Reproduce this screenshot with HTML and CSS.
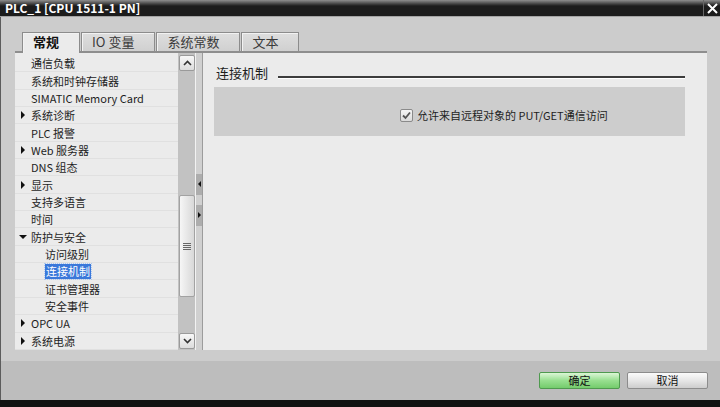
FILE: index.html
```html
<!doctype html>
<html>
  <head>
    <meta charset="utf-8" />
    <title>PLC_1 [CPU 1511-1 PN]</title>
    <link rel="stylesheet" href="styles.css" />
  </head>
  <body>
    <div class="window">
      <div class="titlebar">
        <div class="title">PLC_1 [CPU 1511-1 PN]</div>
        <div class="close">
          <svg width="11" height="11" viewBox="0 0 11 11">
            <path d="M1 1 L10 10 M10 1 L1 10" stroke="#fff" stroke-width="2" />
          </svg>
        </div>
      </div>

      <div class="dialog">
        <div class="tabs">
          <div class="tab active">常规</div>
          <div class="tab">IO 变量</div>
          <div class="tab">系统常数</div>
          <div class="tab">文本</div>
        </div>

        <div class="panel">
          <ul class="tree">
            <li class="node">通信负载</li>
            <li class="node">系统和时钟存储器</li>
            <li class="node">SIMATIC Memory Card</li>
            <li class="node folder"><span class="caret"></span>系统诊断</li>
            <li class="node">PLC 报警</li>
            <li class="node folder"><span class="caret"></span>Web 服务器</li>
            <li class="node">DNS 组态</li>
            <li class="node folder"><span class="caret"></span>显示</li>
            <li class="node">支持多语言</li>
            <li class="node">时间</li>
            <li class="node folder open"><span class="caret"></span>防护与安全</li>
            <li class="node child">访问级别</li>
            <li class="node child"><span class="selected">连接机制</span></li>
            <li class="node child">证书管理器</li>
            <li class="node child">安全事件</li>
            <li class="node folder"><span class="caret"></span>OPC UA</li>
            <li class="node folder"><span class="caret"></span>系统电源</li>
          </ul>

          <div class="scrollbar">
            <div class="scroll-btn">
              <svg width="9" height="6" viewBox="0 0 9 6">
                <path d="M1 5 L4.5 1.5 L8 5" fill="none" stroke="#333" stroke-width="1.6" />
              </svg>
            </div>
            <div class="track">
              <div class="thumb">
                <svg width="8" height="7" viewBox="0 0 8 7">
                  <path d="M0 0.5 H8 M0 2.5 H8 M0 4.5 H8 M0 6.5 H8" stroke="#666" stroke-width="1" />
                </svg>
              </div>
            </div>
            <div class="scroll-btn">
              <svg width="9" height="6" viewBox="0 0 9 6">
                <path d="M1 1 L4.5 4.5 L8 1" fill="none" stroke="#333" stroke-width="1.6" />
              </svg>
            </div>
          </div>

          <div class="splitter">
            <div class="grip"><span class="arrow-left"></span></div>
            <div class="grip"><span class="arrow-right"></span></div>
          </div>

          <div class="content">
            <div class="section-head">
              <span class="section-title">连接机制</span>
              <span class="section-rule"></span>
            </div>
            <div class="section-body">
              <label class="check-row">
                <span class="checkbox">
                  <svg width="11" height="11" viewBox="0 0 11 11">
                    <path d="M2 5.5 L4.5 8 L9 2.5" fill="none" stroke="#555" stroke-width="1.8" />
                  </svg>
                </span>
                允许来自远程对象的 PUT/GET通信访问
              </label>
            </div>
          </div>
        </div>

        <div class="footer">
          <button class="btn ok">确定</button>
          <button class="btn">取消</button>
        </div>
      </div>

      <div class="taskbar"></div>
    </div>
  </body>
</html>
```

FILE: styles.css
```css
* {
  margin: 0;
  padding: 0;
  box-sizing: border-box;
}

body {
  width: 720px;
  height: 407px;
  overflow: hidden;
  background: #111;
  font-family: "Noto Sans CJK SC", "Noto Sans", sans-serif;
  font-size: 11px;
  color: #1e1e1e;
}

.window {
  height: 407px;
  display: flex;
  flex-direction: column;
}

/* title bar */

.titlebar {
  height: 17px;
  display: flex;
  background: linear-gradient(#8e8e8e 0, #404040 4px, #1c1c1c 6px);
  border-bottom: 1px solid #a4a4a4;
  color: #fff;
}

.title {
  flex: 1;
  padding-left: 5px;
  font-weight: bold;
  font-size: 12px;
  line-height: 16px;
}

.close {
  width: 17px;
  border-left: 1px solid #666;
  display: flex;
  align-items: center;
  justify-content: center;
}

/* dialog */

.dialog {
  height: 383px;
  background: #cccccc;
  border-left: 1px solid #5c5c5c;
  display: flex;
  flex-direction: column;
  padding-top: 15px;
}

.tabs {
  display: flex;
  height: 19px;
  padding-left: 21px;
  gap: 1px;
  position: relative;
  z-index: 1;
}

.tab {
  padding: 0 20px 0 10px;
  font-size: 13px;
  line-height: 18px;
  color: #3a3a3a;
  background: linear-gradient(#dedede, #d0d0d0);
  border: 1px solid #8c8c8c;
  border-bottom: none;
  box-shadow: inset 1px 1px 0 #f2f2f2;
}

.tab.active {
  font-weight: bold;
  color: #111;
  background: #ebebeb;
  height: 21px;
}

.panel {
  margin-left: 14px;
  width: 692px;
  height: 299px;
  border-top: 2px solid #8e8e8e;
  background: #ebebeb;
  display: flex;
}

/* tree */

.tree {
  list-style: none;
  width: 163px;
  padding-top: 2px;
}

.node {
  height: 17.35px;
  display: flex;
  align-items: center;
  padding-left: 16px;
  border-bottom: 1px solid #e0e0e0;
  white-space: nowrap;
}

.node.folder {
  padding-left: 6px;
}

.node.child {
  padding-left: 30px;
}

.caret {
  width: 0;
  height: 0;
  margin-right: 6px;
  border-left: 4px solid #111;
  border-top: 4px solid transparent;
  border-bottom: 4px solid transparent;
}

.node.open {
  padding-left: 4px;
}

.node.open .caret {
  margin-right: 4px;
  border-left: 4px solid transparent;
  border-right: 4px solid transparent;
  border-top: 4px solid #111;
  border-bottom: none;
}

.selected {
  padding: 0 1px;
  line-height: 15px;
  background: #3a78da;
  color: #fff;
  outline: 1px dotted #a9c6f2;
}

/* scrollbar */

.scrollbar {
  width: 17px;
  background: #c2c2c2;
  display: flex;
  flex-direction: column;
  padding: 2px 0 1px 1px;
}

.scroll-btn {
  height: 16px;
  width: 16px;
  display: flex;
  align-items: center;
  justify-content: center;
  background: linear-gradient(#f8f8f8, #dcdcdc);
  border: 1px solid #9a9a9a;
  border-radius: 2px;
}

.track {
  flex: 1;
}

.thumb {
  margin-top: 124px;
  height: 102px;
  width: 16px;
  display: flex;
  align-items: center;
  justify-content: center;
  background: linear-gradient(to right, #f6f6f6, #d8d8d8);
  border: 1px solid #a2a2a2;
  border-radius: 2px;
}

/* splitter */

.splitter {
  width: 8px;
  background: #d0d0d0;
  border-left: 1px solid #f2f2f2;
  border-right: 1px solid #9c9c9c;
  display: flex;
  flex-direction: column;
  justify-content: center;
  gap: 10px;
  padding-bottom: 4px;
}

.grip {
  height: 21px;
  background: #adadad;
  display: flex;
  align-items: center;
  justify-content: center;
}

.arrow-left {
  border-right: 3px solid #111;
  border-top: 3px solid transparent;
  border-bottom: 3px solid transparent;
}

.arrow-right {
  border-left: 3px solid #111;
  border-top: 3px solid transparent;
  border-bottom: 3px solid transparent;
}

/* content */

.content {
  flex: 1;
  padding: 13px 22px 0 11px;
}

.section-head {
  height: 14px;
  display: flex;
  align-items: flex-end;
  gap: 10px;
  padding-left: 2px;
}

.section-title {
  font-size: 13px;
  line-height: 14px;
}

.section-rule {
  flex: 1;
  height: 3px;
  margin-bottom: 1px;
  border-top: 2px solid #3c3c3c;
  border-bottom: 1px solid #fff;
}

.section-body {
  margin-top: 7px;
  height: 49px;
  background: #cdcdcd;
  padding: 22px 0 0 186px;
}

.check-row {
  display: flex;
  align-items: center;
  gap: 4px;
  line-height: 13px;
}

.checkbox {
  width: 13px;
  height: 13px;
  display: flex;
  align-items: center;
  justify-content: center;
  background: linear-gradient(#f6f6f6, #dadada);
  border: 1px solid #8a8a8a;
  border-radius: 2px;
}

/* footer */

.footer {
  margin-top: 11px;
  flex: 1;
  background: #bdbdbd;
  display: flex;
  justify-content: flex-end;
  align-items: flex-start;
  gap: 7px;
  padding: 11px 12px 0 0;
}

.btn {
  width: 81px;
  height: 17px;
  font-family: inherit;
  font-size: 11px;
  line-height: 15px;
  color: #111;
  border: 1px solid #8c8c8c;
  border-radius: 2px;
  background: linear-gradient(#fbfbfb, #e6e6e6 50%, #cdcdcd);
}

.btn.ok {
  border-color: #4f9a4f;
  background: linear-gradient(#dcf6d6, #98df90 50%, #74cc6c);
}

.taskbar {
  flex: 1;
  background: #111;
}
```
